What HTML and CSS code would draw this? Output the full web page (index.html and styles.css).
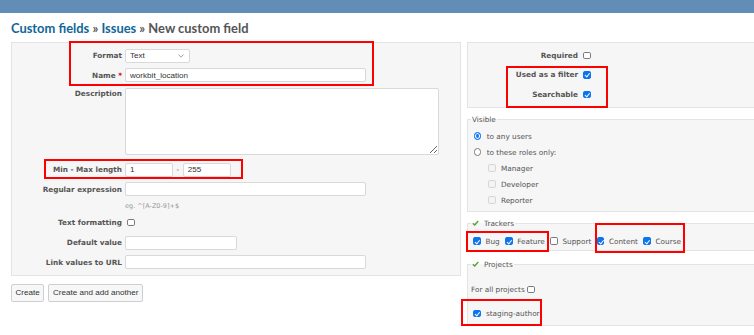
FILE: index.html
```html
<!DOCTYPE html>
<html lang="en">
<head>
    <meta charset="UTF-8">
    <meta name="viewport" content="width=device-width, initial-scale=1.0">
    <title>New custom field</title>
    <link rel="stylesheet" href="styles.css">
</head>
<body>

    <div class="header"></div>

    <div class="content">
        <h2><a href="#">Custom fields</a> &raquo; <a href="#">Issues</a> &raquo; New custom field</h2>

        <div class="columns">
            <div class="col-left">
                <div class="box tabular">
                    <div class="row">
                        <label>Format</label>
                        <div class="select"><span>Text</span>
                            <svg width="6" height="4" viewBox="0 0 6 4"><polyline points="0.5,0.5 3,3.2 5.5,0.5" fill="none" stroke="#9a9a9a" stroke-width="0.9"/></svg>
                        </div>
                    </div>
                    <div class="row">
                        <label>Name <span class="required">*</span></label>
                        <input class="text-input w-long" type="text" value="workbit_location">
                    </div>
                    <div class="row row-area">
                        <label>Description</label>
                        <textarea class="text-input area"></textarea>
                    </div>
                    <div class="row">
                        <label>Min - Max length</label>
                        <input class="text-input w-num" type="text" value="1">
                        <span class="dash">-</span>
                        <input class="text-input w-num" type="text" value="255">
                    </div>
                    <div class="row">
                        <label>Regular expression</label>
                        <input class="text-input w-long" type="text">
                    </div>
                    <div class="hint">eg. ^[A-Z0-9]+$</div>
                    <div class="row row-check">
                        <label>Text formatting</label>
                        <input class="cb cb-first" type="checkbox">
                    </div>
                    <div class="row row-after-check">
                        <label>Default value</label>
                        <input class="text-input w-short" type="text">
                    </div>
                    <div class="row last">
                        <label>Link values to URL</label>
                        <input class="text-input w-long" type="text">
                    </div>
                </div>

                <div class="buttons">
                    <button>Create</button>
                    <button>Create and add another</button>
                </div>
            </div>

            <div class="col-right">
                <div class="box tabular right-box">
                    <div class="row">
                        <label>Required</label>
                        <input class="cb cb-first" type="checkbox">
                    </div>
                    <div class="row">
                        <label>Used as a filter</label>
                        <input class="cb cb-first" type="checkbox" checked>
                    </div>
                    <div class="row last">
                        <label>Searchable</label>
                        <input class="cb cb-first" type="checkbox" checked>
                    </div>
                </div>

                <fieldset class="group visible">
                    <legend>Visible</legend>
                    <div class="opt first"><input class="radio" type="radio" name="vis" checked>to any users</div>
                    <div class="opt"><input class="radio" type="radio" name="vis">to these roles only:</div>
                    <div class="opt role"><input class="cb" type="checkbox" disabled>Manager</div>
                    <div class="opt role"><input class="cb" type="checkbox" disabled>Developer</div>
                    <div class="opt role"><input class="cb" type="checkbox" disabled>Reporter</div>
                </fieldset>

                <fieldset class="group trackers">
                    <legend><svg class="tick" width="7" height="6" viewBox="0 0 7 6"><polyline points="0.8,3.2 2.7,5 6.2,0.9" fill="none" stroke="#5ba43a" stroke-width="1.5"/></svg>Trackers</legend>
                    <div class="tracker-list">
                        <label><input class="cb" type="checkbox" checked>Bug</label>
                        <label><input class="cb" type="checkbox" checked>Feature</label>
                        <label><input class="cb" type="checkbox">Support</label>
                        <label><input class="cb" type="checkbox" checked>Content</label>
                        <label><input class="cb" type="checkbox" checked>Course</label>
                    </div>
                </fieldset>

                <fieldset class="group projects">
                    <legend><svg class="tick" width="7" height="6" viewBox="0 0 7 6"><polyline points="0.8,3.2 2.7,5 6.2,0.9" fill="none" stroke="#5ba43a" stroke-width="1.5"/></svg>Projects</legend>
                    <div class="all-projects">For all projects <input class="cb" type="checkbox"></div>
                    <div class="project"><input class="cb" type="checkbox" checked>staging-author</div>
                </fieldset>
            </div>
        </div>
    </div>

    <!-- review highlights -->
    <div class="mark mark-format"></div>
    <div class="mark mark-length"></div>
    <div class="mark mark-filter"></div>
    <div class="mark mark-bug"></div>
    <div class="mark mark-content"></div>
    <div class="mark mark-project"></div>

</body>
</html>
```

FILE: styles.css
```css
* { box-sizing: border-box; }

html, body { overflow: hidden; }

body {
    margin: 0;
    width: 754px;
    height: 335px;
    position: relative;
    background: #fff;
    font-family: "DejaVu Sans", Verdana, sans-serif;
    font-size: 7.3px;
    line-height: 9px;
    color: #555;
}

.header {
    height: 13px;
    background: #628db6;
}

.content {
    padding-left: 11px;
}

h2 {
    font-family: Lato, "DejaVu Sans", sans-serif;
    font-weight: bold;
    font-size: 12.9px;
    line-height: 15px;
    margin: 8px 0 6px;
    color: #555;
}

h2 a {
    color: #169;
    text-decoration: none;
}

.columns {
    display: flex;
    gap: 6px;
    width: 760px;
}

.col-left { width: 450px; flex: none; }
.col-right { width: 300px; flex: none; }

.box {
    background: #f6f6f6;
    border: 1px solid #e4e4e4;
}

.tabular {
    padding: 5.7px 0 6px;
}

.row {
    display: flex;
    align-items: center;
    height: 14px;
    margin-bottom: 5.6px;
}

.row.last { margin-bottom: 0; }

.row label {
    width: 113px;
    flex: none;
    text-align: right;
    padding-right: 3px;
    font-weight: bold;
}

.required { color: #bb0000; }

.text-input {
    height: 14px;
    margin: 0;
    border: 1px solid #d9d9d9;
    border-radius: 2px;
    background: #fff;
    padding: 0 4px;
    font-family: "Liberation Sans", Arial, sans-serif;
    font-size: 8.1px;
    color: #333;
}

.w-long { width: 241px; }
.w-short { width: 112px; }
.w-num { width: 48px; }

.select {
    width: 65px;
    height: 14px;
    display: flex;
    align-items: center;
    justify-content: space-between;
    padding: 0 5px 0 4px;
    border: 1px solid #d9d9d9;
    border-radius: 2px;
    background: #fff;
    font-family: "Liberation Sans", Arial, sans-serif;
    font-size: 8.1px;
    color: #333;
}

.row-area {
    height: auto;
    align-items: flex-start;
    margin-bottom: 8px;
}

.row-area label { padding-top: 1.5px; }

.area {
    width: 314px;
    height: 67px;
    resize: vertical;
    display: block;
}

.dash {
    margin: 0 3.5px;
}

.hint {
    margin: 2.3px 0 0 113px;
    font-size: 6.5px;
    color: #999;
}

.row-check {
    height: 12px;
    margin-top: 5.5px;
    margin-bottom: 7px;
}

/* checkboxes and radios drawn by hand */
.cb {
    -webkit-appearance: none;
    appearance: none;
    position: relative;
    width: 7.6px;
    height: 7.6px;
    margin: 0;
    flex: none;
    border: 1px solid #7a7a7a;
    border-radius: 1.8px;
    background: #fff;
}

.cb:checked {
    background: #0b75f0;
    border-color: #0b75f0;
}

.cb:checked::after {
    content: "";
    position: absolute;
    left: 1.9px;
    top: 0.2px;
    width: 1.7px;
    height: 3.6px;
    border: solid #fff;
    border-width: 0 1.1px 1.1px 0;
    transform: rotate(40deg);
}

.cb:disabled {
    background: #f3f3f3;
    border-color: #d6d6d6;
}

.radio {
    -webkit-appearance: none;
    appearance: none;
    width: 7.6px;
    height: 7.6px;
    margin: 0 5.6px 0 2.5px;
    flex: none;
    border: 1px solid #7a7a7a;
    border-radius: 50%;
    background: #fff;
}

.radio:checked {
    border-color: #0b75f0;
    background: #0b75f0;
    box-shadow: inset 0 0 0 1.1px #fff;
}

.cb-first { margin-left: 2px; }

.right-box {
    padding: 5.3px 0 6px;
}

/* fieldsets on the right */
.group {
    margin: 0;
    min-width: 0;
    border: 1px solid #e4e4e4;
    background: #f6f6f6;
    padding: 0 0 3px 3px;
}

.group legend {
    padding: 0 1px;
    line-height: 9px;
    color: #555;
}

.tick {
    margin-right: 5px;
    vertical-align: 0;
}

.visible { margin-top: 6.5px; }

.opt {
    display: flex;
    align-items: center;
    height: 16px;
}

.opt.first { margin-top: 4.3px; }

.opt.role .cb { margin: 0 5px 0 17.3px; }

.trackers {
    margin-top: 7.2px;
    padding-bottom: 2.4px;
}

.tracker-list {
    display: flex;
    align-items: center;
    height: 12px;
    margin-top: 6.8px;
    padding-left: 2.3px;
}

.tracker-list label {
    display: flex;
    align-items: center;
    margin-right: 5.5px;
}

.tracker-list .cb { margin-right: 4.5px; }

.projects {
    margin-top: 9.5px;
    padding-bottom: 5.2px;
}

.all-projects {
    display: flex;
    align-items: center;
    height: 12px;
    margin-top: 14.3px;
}

.all-projects .cb { margin-left: 2.3px; }

.project {
    display: flex;
    align-items: center;
    height: 12px;
    margin-top: 12px;
    padding-left: 2.3px;
}

.project .cb { margin-right: 5px; }

.buttons {
    display: flex;
    gap: 3.7px;
    margin-top: 8px;
}

.buttons button {
    height: 17.4px;
    margin: 0;
    padding: 0 3.5px;
    border: 1px solid #cfcfcf;
    border-radius: 2px;
    background: #f7f7f7;
    font-family: "Liberation Sans", Arial, sans-serif;
    font-size: 8.1px;
    color: #333;
}

.buttons button + button { padding: 0 4px; }

/* red annotation boxes drawn over the form */
.mark {
    position: absolute;
    border: 2px solid #f00;
}

.mark-format  { left: 69px;  top: 41px;  width: 305px; height: 45px; }
.mark-length  { left: 44px;  top: 159px; width: 199px; height: 20px; }
.mark-filter  { left: 506px; top: 66px;  width: 102px; height: 42px; }
.mark-bug     { left: 466px; top: 231px; width: 83px;  height: 21px; }
.mark-content { left: 595px; top: 223px; width: 90px;  height: 30px; }
.mark-project { left: 461px; top: 299px; width: 81px;  height: 27px; }
```
